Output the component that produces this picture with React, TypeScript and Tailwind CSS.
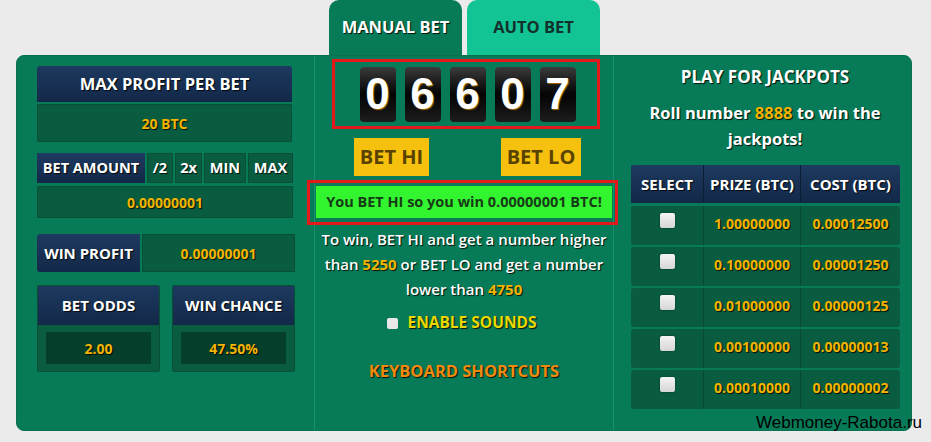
const glow = '[text-shadow:1px_1px_1px_rgba(0,0,0,0.85)]';

const digits = ['0', '6', '6', '0', '7'];

const jackpots = [
  ['1.00000000', '0.00012500'],
  ['0.10000000', '0.00001250'],
  ['0.01000000', '0.00000125'],
  ['0.00100000', '0.00000013'],
  ['0.00010000', '0.00000002'],
];

function Navy({ children, className = '' }: { children: React.ReactNode; className?: string }) {
  return (
    <div
      className={`flex items-center justify-center bg-gradient-to-b from-[#1d3a60] to-[#132848] text-white font-bold ${glow} ${className}`}
    >
      {children}
    </div>
  );
}

function Cell({ children, className = '' }: { children?: React.ReactNode; className?: string }) {
  return (
    <div
      className={`flex items-center justify-center bg-[#0a5c40] border border-[#075036] font-bold ${glow} ${className}`}
    >
      {children}
    </div>
  );
}

function Tick() {
  return <span className="block w-[15px] h-[15px] rounded-[2px] bg-gradient-to-b from-[#f4f4f4] to-[#d6d6d6] shadow-[0_0_2px_rgba(0,0,0,0.5)]" />;
}

function LeftColumn() {
  return (
    <div className="w-[297px] shrink-0 pt-[10px] pl-[20px]">
      <Navy className="w-[255px] h-[36px] text-[16.5px] rounded-t-[3px]">MAX PROFIT PER BET</Navy>
      <Cell className="mt-[2px] w-[255px] h-[38px] text-[14px] text-[#f2b400]">20 BTC</Cell>

      <div className="mt-[11px] flex gap-[2px] h-[30px] text-[14.5px]">
        <Navy className="w-[108px]">BET AMOUNT</Navy>
        <Cell className="w-[26px] text-white">/2</Cell>
        <Cell className="w-[27px] text-white">2x</Cell>
        <Cell className="w-[42px] text-white">MIN</Cell>
        <Cell className="w-[45px] text-white">MAX</Cell>
      </div>
      <Cell className="mt-[3px] w-[256px] h-[32px] text-[14px] text-[#f2b400]">0.00000001</Cell>

      <div className="mt-[16px] flex gap-[2px] h-[38px]">
        <Navy className="w-[103px] rounded-l-[3px] text-[15px]">WIN PROFIT</Navy>
        <Cell className="w-[153px] text-[14px] text-[#f2b400]">0.00000001</Cell>
      </div>

      <div className="mt-[13px] flex gap-[12px]">
        {[
          ['BET ODDS', '2.00'],
          ['WIN CHANCE', '47.50%'],
        ].map(([label, value]) => (
          <div key={label} className="w-[123px] h-[87px] bg-[#0a5c40] border border-[#075036] rounded-[2px]">
            <Navy className="h-[39px] text-[15px]">{label}</Navy>
            <div
              className={`mx-[8px] mt-[7px] h-[32px] flex items-center justify-center bg-[#053e2a] text-[14px] font-bold text-[#f2b400] ${glow}`}
            >
              {value}
            </div>
          </div>
        ))}
      </div>
    </div>
  );
}

function CenterColumn() {
  return (
    <div className="w-[300px] shrink-0 border-x border-[#11936b]">
      <div className="mt-[3px] ml-[17px] w-[268px] h-[70px] border-[3px] border-[#e3191b] flex items-center justify-center gap-[9px] pl-[3px]">
        {digits.map((d, i) => (
          <div
            key={i}
            className="w-[36px] h-[55px] rounded-[4px] bg-gradient-to-b from-[#3c3c3c] via-[#050505] to-[#1d1d1d] flex items-center justify-center text-white font-bold text-[44px] font-['Liberation_Sans',sans-serif] [text-shadow:1px_1px_1px_#a86a00]"
          >
            {d}
          </div>
        ))}
      </div>

      <div className="mt-[9px] flex text-[20px] font-bold text-[#5a4200]">
        <div className="ml-[39px] w-[75px] h-[38px] bg-[#f5c10e] flex items-center justify-center">BET HI</div>
        <div className="ml-[72px] w-[80px] h-[38px] bg-[#f5c10e] flex items-center justify-center">BET LO</div>
      </div>

      <div className="mt-[4px] -ml-[8px] w-[311px] h-[45px] border-[3px] border-[#e3191b] pl-[6px] pr-[3px] pt-[3px] pb-[4px]">
        <div className="h-full bg-[#33f52f] flex items-center justify-center text-[14.5px] font-bold text-[#173a17]">
          You BET HI so you win 0.00000001 BTC!
        </div>
      </div>

      <p className={`mt-[2px] text-center text-[15px] leading-[25px] text-white font-semibold whitespace-nowrap ${glow}`}>
        To win, BET HI and get a number higher
        <br />
        than <span className="text-[#f2b400] font-bold">5250</span> or BET LO and get a number
        <br />
        lower than <span className="text-[#f2b400] font-bold">4750</span>
      </p>

      <div className="mt-[9px] h-[24px] flex items-center justify-center gap-[9px] pr-[4px]">
        <span className="block w-[11px] h-[11px] rounded-[2px] bg-[#e8e8e8]" />
        <span className={`text-[15.5px] font-bold text-[#ecd800] ${glow}`}>ENABLE SOUNDS</span>
      </div>

      <div className={`mt-[24px] h-[24px] flex items-center justify-center text-[16.5px] font-bold text-[#f28a10] ${glow}`}>
        KEYBOARD SHORTCUTS
      </div>
    </div>
  );
}

function RightColumn() {
  return (
    <div className="flex-1 pt-[10px] pl-[17px]">
      <div className={`w-[268px] h-[22px] flex items-center justify-center text-[17px] font-bold text-white ${glow}`}>
        PLAY FOR JACKPOTS
      </div>
      <p className={`mt-[12px] w-[268px] text-center text-[16.5px] leading-[26px] font-bold text-white ${glow}`}>
        Roll number <span className="text-[#f2b400]">8888</span> to win the
        <br />
        jackpots!
      </p>

      <div className="mt-[13px] w-[269px] grid grid-cols-[73px_97px_99px] h-[38px] text-[15px]">
        <Navy className="border-r border-[#0c1d36] rounded-tl-[2px]">SELECT</Navy>
        <Navy className="border-r border-[#0c1d36]">PRIZE (BTC)</Navy>
        <Navy className="rounded-tr-[2px]">COST (BTC)</Navy>
      </div>

      <div className="mt-[3px] flex flex-col gap-[2px] w-[269px]">
        {jackpots.map(([prize, cost]) => (
          <div
            key={prize}
            className={`grid grid-cols-[73px_97px_99px] h-[39px] bg-[#0a5c40] rounded-[3px] text-[14px] font-bold text-[#f2b400] ${glow}`}
          >
            <div className="flex justify-center pt-[7px] border-r border-[#074a33]">
              <Tick />
            </div>
            <div className="flex items-center justify-center pb-[4px] border-r border-[#074a33]">{prize}</div>
            <div className="flex items-center justify-center pb-[4px]">{cost}</div>
          </div>
        ))}
      </div>
    </div>
  );
}

export default function App() {
  return (
    <div className="relative w-[931px] h-[442px] overflow-hidden bg-[#ebebeb] font-['Open_Sans',sans-serif]">
      <div className="pl-[16px]">
        <div className="flex h-[55px] pl-[313px] gap-[5px]">
          <div
            className={`w-[133px] rounded-t-[10px] bg-[#077b57] flex items-center justify-center text-[16.5px] font-bold text-white ${glow}`}
          >
            MANUAL BET
          </div>
          <div className="w-[133px] rounded-t-[10px] bg-[#12c493] flex items-center justify-center text-[16.5px] font-bold text-[#12302c]">
            AUTO BET
          </div>
        </div>

        <div className="flex w-[896px] h-[376px] rounded-[8px] bg-[#077b57] border border-[#0a7050]">
          <LeftColumn />
          <CenterColumn />
          <RightColumn />
        </div>
      </div>

      <div className="absolute right-[9px] top-[412px] text-[17px] leading-[22px] text-black font-['Liberation_Sans',sans-serif]">
        Webmoney-Rabota.ru
      </div>
    </div>
  );
}
